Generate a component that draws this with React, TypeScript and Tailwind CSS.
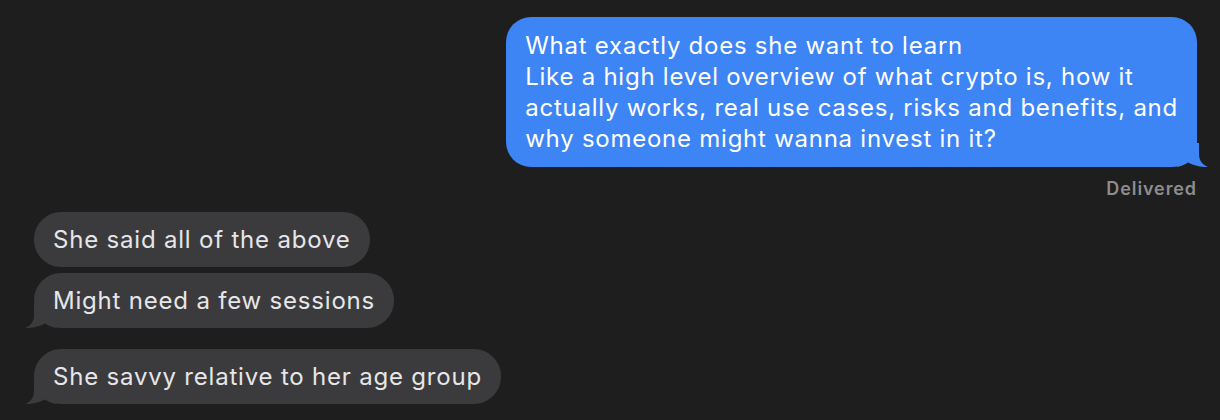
import React from "react";

const LeftTail = ({ color }: { color: string }) => (
  <svg className="absolute bottom-0 left-[-10px]" width="32" height="24" viewBox="0 0 32 24">
    <path d="M10 0 L10 11 C10 17.5 7 21.5 1 24 C8 24.4 15 22.5 21 19.5 C24 21.5 28 23.5 32 24 L32 0 Z" fill={color} />
  </svg>
);

const RightTail = ({ color }: { color: string }) => (
  <svg className="absolute bottom-0 right-[-12px]" width="32" height="24" viewBox="0 0 32 24">
    <path d="M22 0 L22 11 C22 17.5 25 21.5 31 24 C24 24.4 17 22.5 11 19.5 C8 21.5 4 23.5 0 24 L0 0 Z" fill={color} />
  </svg>
);

const Gray = ({ text, tail }: { text: string; tail?: boolean }) => (
  <div className="relative self-start whitespace-nowrap rounded-[27px] bg-[#3b3b3d] px-[19px] py-[12px] text-[24px] leading-[31px] tracking-[0.8px] text-[#e6e6e8]">
    {tail && <LeftTail color="#3b3b3d" />}
    <span className="relative">{text}</span>
  </div>
);

export default function App() {
  return (
    <div
      className="h-[420px] w-[1220px] overflow-hidden bg-[#1e1e1e]"
      style={{ fontFamily: "Inter, 'Liberation Sans', sans-serif" }}
    >
      <div className="flex flex-col pl-[34px] pr-[23px] pt-[17px]">
        <div className="relative self-end rounded-[25px] bg-[#3d84f5] px-[19px] py-[13px] text-[24px] leading-[31px] tracking-[0.75px] text-white">
          <RightTail color="#3d84f5" />
          <div className="relative whitespace-nowrap">
            What exactly does she want to learn
            <br />
            Like a high level overview of what crypto is, how it
            <br />
            actually works, real use cases, risks and benefits, and
            <br />
            why someone might wanna invest in it?
          </div>
        </div>
        <div className="mt-[12px] self-end text-[18px] font-semibold leading-[20px] tracking-[0.9px] text-[#8d8d8f]">Delivered</div>
        <div className="mt-[13px] flex flex-col">
          <Gray text="She said all of the above" />
          <div className="mt-[6px] flex">
            <Gray text="Might need a few sessions" tail />
          </div>
          <div className="mt-[21px] flex">
            <Gray text="She savvy relative to her age group" tail />
          </div>
        </div>
      </div>
    </div>
  );
}
